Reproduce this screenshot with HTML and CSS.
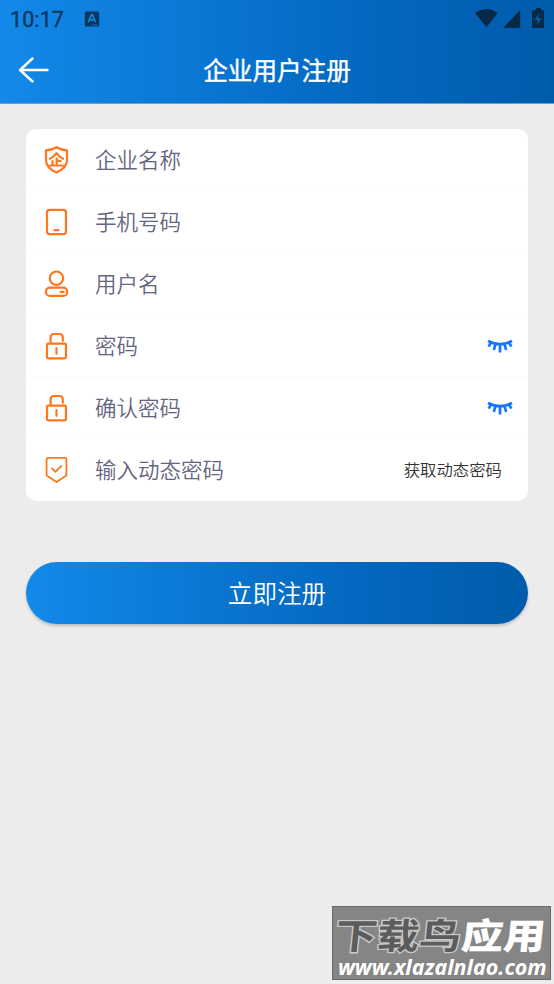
FILE: index.html
```html
<!DOCTYPE html>
<html lang="zh-CN">
<head>
<meta charset="UTF-8">
<meta name="viewport" content="width=device-width, initial-scale=1">
<title>企业用户注册</title>
<link rel="stylesheet" href="styles.css">
</head>
<body>
<svg class="defs" width="0" height="0">
  <symbol id="lock" viewBox="0 0 28 30"><rect x="4" y="12.600" width="19" height="14.800" rx="1.300"/><path d="M7.600 12V6.400Q7.600 3 11 3h5.400q3.400 0 3.400 3.400v3.400M13.500 17.200v5.600"/></symbol>
  <symbol id="lashes" viewBox="0 0 28 18"><path d="M2 4Q14 10.300 26 4M5.200 5.300 2.600 9.600M9.400 7 7.900 13M14 7.500v8.100M18.600 7l1.500 6M22.800 5.300l2.600 4.300"/></symbol>
</svg>
<header class="header">
  <div class="status">
    <span class="clock">10:17</span>
    <svg class="app-icon" viewBox="0 0 16 16"><rect x=".8" y=".6" width="14.400" height="15" rx="1.600"/><path class="letter" d="m4.300 11.300 3.200-7.800h.8l3.200 7.800M5.500 8.900H10"/><path class="dash" d="M7.500 14h6"/></svg>
    <svg class="system" viewBox="0 0 72 22"><path d="M1 4.700Q12.500-2.500 24 4.700L12.500 19.200zM29 20 46.200 2v18zM60 2h2V0h5v2h2q1 0 1 1v16q0 1-1 1H59q-1 0-1-1V3q0-1 1-1z"/><path class="bolt" d="m65.500 5-5 7H64l-1.700 5.600 5.200-7.400h-3.600z"/></svg>
  </div>
  <div class="titlebar">
    <svg class="back" viewBox="0 0 32 28"><path d="M30.500 14H3M15.500 2.500 3 14l12.500 11.500"/></svg>
    <h1>企业用户注册</h1>
  </div>
</header>
<main>
  <form class="card">
    <div class="row">
      <svg class="icon" viewBox="0 0 28 30"><path d="M13.500 2.200Q18.500 5.200 24 5.400V15q0 8-10.500 12.400Q3 23 3 15V5.400Q8.500 5.200 13.500 2.200z"/><path class="enterprise" d="M6.200 14.200q5-2.300 7.300-6 2.300 3.700 7.300 6M13.700 12.400v8M13.700 15.900h4.800M9.500 15.200v5.200M6.200 20.500h14.600"/></svg>
      <label>企业名称</label>
    </div>
    <div class="row">
      <svg class="icon" viewBox="0 0 28 30"><rect x="4" y="2.900" width="19" height="24.200" rx="2.600"/><path d="M11.500 23.200h4"/></svg>
      <label>手机号码</label>
    </div>
    <div class="row">
      <svg class="icon" viewBox="0 0 28 30"><circle cx="13.500" cy="9.200" r="6.700"/><rect x="2.900" y="18.700" width="21.300" height="8.200" rx="4"/><path d="M17.700 22.900h3"/></svg>
      <label>用户名</label>
    </div>
    <div class="row">
      <svg class="icon"><use href="#lock"/></svg>
      <label>密码</label>
      <svg class="eye"><use href="#lashes"/></svg>
    </div>
    <div class="row">
      <svg class="icon"><use href="#lock"/></svg>
      <label>确认密码</label>
      <svg class="eye"><use href="#lashes"/></svg>
    </div>
    <div class="row">
      <svg class="icon thin" viewBox="0 0 28 30"><path d="M5 2.900h17q1.400 0 1.400 1.400v16.200l-9.900 6.500-9.900-6.500V4.300Q3.600 2.900 5 2.900zM8.900 13.400l3.400 3.500 5.900-5.900"/></svg>
      <label>输入动态密码</label>
      <span class="code">获取动态密码</span>
    </div>
  </form>
  <button class="submit" type="button">立即注册</button>
</main>
<aside class="watermark">
  <div class="brand"><span>下载鸟</span><b>应用</b></div>
  <div class="site">www.xlazalnlao.com</div>
</aside>
</body>
</html>
```
FILE: styles.css
```css
* { box-sizing: border-box; }
body {
  margin: 0;
  height: 984px;
  overflow: hidden;
  background: #ececec;
  font-family: "Noto Sans CJK SC", sans-serif;
}
svg { display: block; fill: none; stroke-linecap: round; stroke-linejoin: round; }
.defs { position: absolute; }
.header {
  height: 104px;
  background: linear-gradient(90deg, #1389e9, #0368c0 65%, #005bab);
  border-bottom: 1px solid #64a1d7;
}
.status { display: flex; height: 38px; padding: 8px 8px 0 10px; }
.clock { width: 74px; font: 400 21.500px/24px Roboto, sans-serif; letter-spacing: .1px; color: #07365e; -webkit-text-stroke: .35px #07365e; }
.app-icon { width: 16px; height: 16px; margin-top: 2.500px; fill: #07365e; }
.letter, .dash { fill: none; stroke: #1682dc; stroke-width: 1.700; stroke-linecap: butt; }
.dash { stroke-width: .8; }
.system { width: 72px; height: 22px; margin-left: auto; fill: #052947; }
.bolt { fill: #0560b0; }
.titlebar { position: relative; height: 65px; display: flex; align-items: center; justify-content: center; }
.back { position: absolute; left: 17px; top: 18px; width: 32px; height: 28px; stroke: #fff; stroke-width: 2.400; }
h1 { margin: 0 0 4px; font-size: 24.600px; line-height: 36px; font-weight: 400; -webkit-text-stroke: .4px #fff; color: #fff; }
main { padding: 25px 26px 0; }
.card { height: 372px; background: #fff; border-radius: 10px; overflow: hidden; }
.row { display: flex; align-items: center; height: 62px; padding: 0 14px 0 17px; border-bottom: 1px solid #fafafa; }
.row:last-child { border-bottom: 0; }
.icon { width: 28px; height: 30px; margin-right: 24px; stroke: #ff761c; stroke-width: 2.200; }
.thin { stroke-width: 1.800; }
.enterprise { stroke-width: 2.200; stroke-linecap: butt; }
label { margin-bottom: 2px; font-size: 21.500px; line-height: 32px; color: #65657f; font-weight: 350; }
.eye { width: 28px; height: 18px; margin-left: auto; stroke: #1276ff; stroke-width: 2.700; stroke-linecap: butt; }
.code { margin: 0 12px 2px auto; font-size: 16.400px; line-height: 24px; color: #333; font-weight: 350; }
.submit {
  display: block;
  width: 502px;
  height: 62px;
  margin-top: 61px;
  padding: 0 0 2px;
  border: 0;
  border-radius: 31px;
  background: linear-gradient(90deg, #1389e9, #0368c0 65%, #005bab);
  box-shadow: 0 2px 3px rgba(0,0,0,.2);
  font: 350 24.600px/36px "Noto Sans CJK SC", sans-serif;
  color: #fff;
}
.watermark {
  position: absolute;
  left: 332px;
  top: 906px;
  width: 219px;
  height: 74px;
  background: #858585;
  border: 1px solid #696969;
  color: #fff;
  white-space: nowrap;
}
.brand { display: flex; width: 214px; height: 47px; padding-left: 3px; font-size: 42px; line-height: 54px; font-weight: 700; transform: scaleY(.85) skewX(-5deg); }
.brand span { color: #5c5c5c; -webkit-text-stroke: 3px #c9c9c9; paint-order: stroke fill; }
.site { width: max-content; padding-left: 5px; font: italic 700 22px/24px "Noto Sans", "Open Sans", sans-serif; transform: scaleX(.975); transform-origin: left; }
```
